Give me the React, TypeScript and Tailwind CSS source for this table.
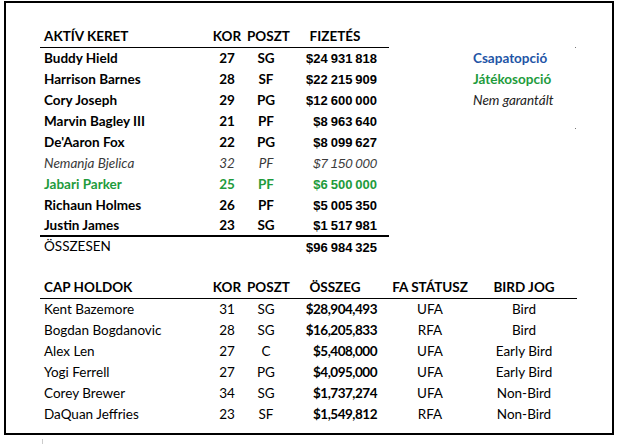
const font = "font-['Lato','Liberation_Sans',sans-serif]";
const arial = "font-['Liberation_Sans',Arial,sans-serif] text-[13px] [word-spacing:-0.7px]";

type Roster = { name: string; age: number; pos: string; pay: string; kind?: "italic" | "green" };

const roster: Roster[] = [
  { name: "Buddy Hield", age: 27, pos: "SG", pay: "$24 931 818" },
  { name: "Harrison Barnes", age: 28, pos: "SF", pay: "$22 215 909" },
  { name: "Cory Joseph", age: 29, pos: "PG", pay: "$12 600 000" },
  { name: "Marvin Bagley III", age: 21, pos: "PF", pay: "$8 963 640" },
  { name: "De'Aaron Fox", age: 22, pos: "PG", pay: "$8 099 627" },
  { name: "Nemanja Bjelica", age: 32, pos: "PF", pay: "$7 150 000", kind: "italic" },
  { name: "Jabari Parker", age: 25, pos: "PF", pay: "$6 500 000", kind: "green" },
  { name: "Richaun Holmes", age: 26, pos: "PF", pay: "$5 005 350" },
  { name: "Justin James", age: 23, pos: "SG", pay: "$1 517 981" },
];

const holds = [
  { name: "Kent Bazemore", age: 31, pos: "SG", amount: "$28,904,493", fa: "UFA", bird: "Bird" },
  { name: "Bogdan Bogdanovic", age: 28, pos: "SG", amount: "$16,205,833", fa: "RFA", bird: "Bird" },
  { name: "Alex Len", age: 27, pos: "C", amount: "$5,408,000", fa: "UFA", bird: "Early Bird" },
  { name: "Yogi Ferrell", age: 27, pos: "PG", amount: "$4,095,000", fa: "UFA", bird: "Early Bird" },
  { name: "Corey Brewer", age: 34, pos: "SG", amount: "$1,737,274", fa: "UFA", bird: "Non-Bird" },
  { name: "DaQuan Jeffries", age: 23, pos: "SF", amount: "$1,549,812", fa: "RFA", bird: "Non-Bird" },
];

const cols1 = "grid grid-cols-[167px_40px_38px_104px]";
const cols2 = "grid grid-cols-[167px_40px_38px_104px_82px_106px]";

function rowStyle(kind?: Roster["kind"]) {
  if (kind === "italic") return "italic font-normal text-[#3a3a3a]";
  if (kind === "green") return "font-bold text-[#1e9b3c]";
  return "font-bold text-black";
}

export default function App() {
  return (
    <div className={`h-[444px] w-[621px] bg-white ${font} text-[13.5px] leading-none text-black`}>
      <div className="relative ml-[4px] mt-[1px] h-[434px] w-[610px] border-2 border-black pl-[34px] pt-[24px]">
        <div className="flex">
          <div className="w-[349px]">
            <div className={`${cols1} h-[21px] items-center border-b border-black font-bold`}>
              <div className="pl-[4px]">AKTÍV KERET</div>
              <div className="text-center">KOR</div>
              <div className="text-center">POSZT</div>
              <div className="pr-[4px] text-center">FIZETÉS</div>
            </div>
            {roster.map((r, i) => (
              <div
                key={r.name}
                className={`${cols1} h-[21px] items-center ${rowStyle(r.kind)} ${
                  i === roster.length - 1 ? "border-b-2 border-black" : ""
                }`}
              >
                <div className="pl-[4px]">{r.name}</div>
                <div className="text-center">{r.age}</div>
                <div className="text-center">{r.pos}</div>
                <div className={`${arial} pr-[12px] text-right`}>{r.pay}</div>
              </div>
            ))}
            <div className={`${cols1} h-[20px] items-center`}>
              <div className="pl-[4px]">ÖSSZESEN</div>
              <div />
              <div />
              <div className={`${arial} pr-[12px] text-right font-bold`}>$96 984 325</div>
            </div>
          </div>
          <div className="ml-[84px] mt-[21px] flex flex-col">
            <div className="flex h-[21px] items-center font-bold text-[#1f55a6]">Csapatopció</div>
            <div className="flex h-[21px] items-center font-bold text-[#1e9b3c]">Játékosopció</div>
            <div className="flex h-[21px] items-center italic text-[#222]">Nem garantált</div>
          </div>
        </div>

        <div className="mt-[21px] w-[537px]">
          <div className={`${cols2} h-[21px] items-center border-b border-black font-bold`}>
            <div className="pl-[4px]">CAP HOLDOK</div>
            <div className="text-center">KOR</div>
            <div className="text-center">POSZT</div>
            <div className="pr-[4px] text-center">ÖSSZEG</div>
            <div className="text-center">FA STÁTUSZ</div>
            <div className="text-center">BIRD JOG</div>
          </div>
          {holds.map((h) => (
            <div key={h.name} className={`${cols2} h-[21px] items-center`}>
              <div className="pl-[4px]">{h.name}</div>
              <div className="text-center">{h.age}</div>
              <div className="text-center">{h.pos}</div>
              <div className="pr-[12px] text-right font-bold tracking-[-0.5px]">{h.amount}</div>
              <div className="text-center">{h.fa}</div>
              <div className="text-center">{h.bird}</div>
            </div>
          ))}
        </div>

        <span className="absolute left-[569px] top-[44px] h-px w-px bg-[#777]" />
        <span className="absolute left-[569px] top-[125px] h-px w-px bg-[#777]" />
      </div>
      <div className="ml-[42px] mt-[4px] h-[5px] w-px bg-[#ccc]" />
    </div>
  );
}
